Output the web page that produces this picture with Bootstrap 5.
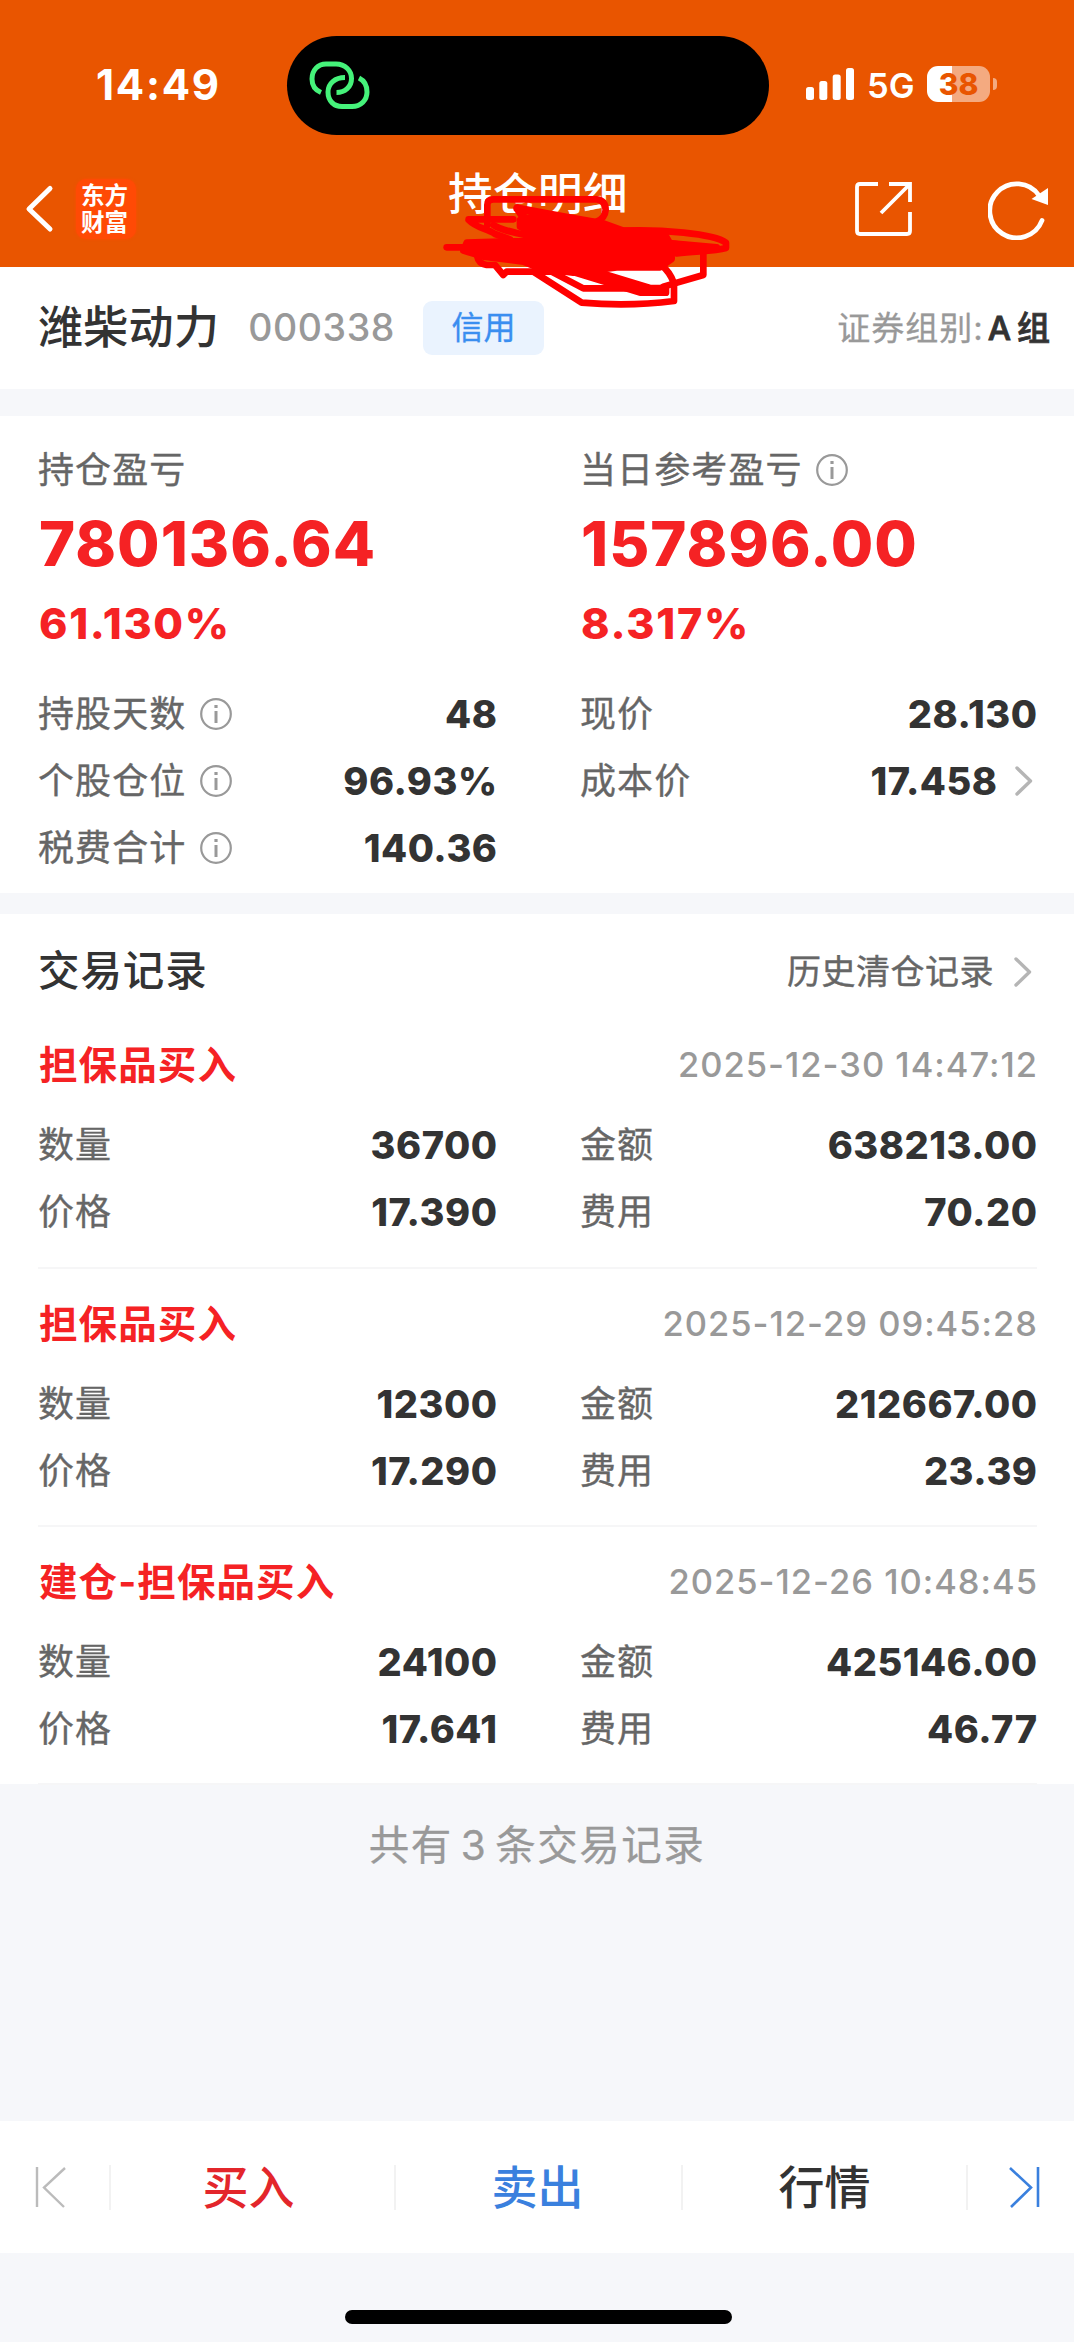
<!DOCTYPE html>
<html lang="zh-CN">
<head>
<meta charset="utf-8">
<meta name="viewport" content="width=device-width, initial-scale=1">
<title>持仓明细</title>
<link href="https://cdn.jsdelivr.net/npm/bootstrap@5.3.0/dist/css/bootstrap.min.css" rel="stylesheet">
<style>
body{font-family:Inter,"Noto Sans CJK SC",sans-serif;background:#f6f7fa;color:#333;width:1074px;height:2342px;overflow:hidden;line-height:1}
svg{display:block;flex:none}
.app-head{background:#e95500;height:267px;color:#fff}
.status{height:137px;padding:36px 0 0 96px}
.clock{font-size:42px;font-weight:700;width:190.5px;line-height:98px;letter-spacing:1.7px}
.island{width:482.5px;height:99px;border-radius:50px;background:#000;padding:25px 0 0 21px}
.cell-sig{margin-left:37px;margin-right:14px;margin-top:32px}
.net{font-size:34.5px;font-weight:600;line-height:99px;width:59px;margin-left:-1px;margin-right:1px}
.batt{width:63px;height:36px;border-radius:11px;background:linear-gradient(90deg,#fff 25px,rgba(255,255,255,.5) 25px);color:#e95500;font-size:30px;font-weight:800;line-height:36px;text-align:center;margin-top:30px}
.nub{width:4px;height:12px;border-radius:0 4px 4px 0;background:rgba(255,255,255,.5);margin:42px 0 0 3px}
.titlebar{height:130px;padding:0 24px}
.logo{width:60px;height:60px;border-radius:10px;background:#ff4a05;box-shadow:0 0 3px #ff4a05;font:700 23.5px/27px "Noto Sans CJK SC",sans-serif;padding:2px 0 0 5px;margin:42px 0 0 20px}
.title{font-size:44.5px;font-weight:500;line-height:60px;width:182px;letter-spacing:.5px;margin:27px 0 0 312px}
.stock{height:122px;padding:0 24px 0 38px}
.stock-name{font-size:45px;font-weight:500;line-height:120px;letter-spacing:.3px}
.stock-code{font-size:37.5px;font-weight:500;color:#999;letter-spacing:.6px;margin-left:29px}
.tag{width:121px;height:54px;border-radius:9px;background:#eaf3fe;color:#3a8ef0;font-size:32px;line-height:53px;text-align:center;margin-left:28px;-webkit-text-stroke:.35px}
.group{font-size:33px;color:#999;letter-spacing:1px;-webkit-text-stroke:.3px}
.group-v{color:#333;font-weight:500;margin-left:4px;letter-spacing:0;word-spacing:-3px;-webkit-text-stroke:.8px}
.sec{background:#fff;padding:0 37px 0 38px}
.half-l{width:459px;margin-right:83px}
.half-r{width:457px}
.lab{font-size:36px;color:#666;letter-spacing:1.1px;-webkit-text-stroke:.35px}
.val{font-size:38px;font-weight:800;color:#333;letter-spacing:.5px;margin-right:-.5px}
.up{color:#f52224}
.ic{margin-left:13.5px}
.r67{height:67px}
.big{font-size:61.5px;font-weight:800;height:75px;line-height:75px;letter-spacing:1px;margin:10px 0 0 1px}
.pct{font-size:43px;font-weight:800;height:60px;line-height:60px;letter-spacing:1.7px;margin:12px 0 27px 1px}
.sec-title{font-size:41.5px;font-weight:500;letter-spacing:.9px;padding-top:2px}
.more{font-size:34px;color:#666;letter-spacing:.5px;padding-top:1px;-webkit-text-stroke:.4px}
.rec{height:258px;padding-top:18px;border-bottom:2px solid #f6f6f7}
.rec-t{height:74px;margin-bottom:9px}
.act{font-size:38.5px;font-weight:700;letter-spacing:1.1px;margin-left:1px}
.when{font-size:34.5px;font-weight:500;color:#999;letter-spacing:1px;margin-right:-1px}
.total{height:337px;padding-top:38px;color:#999;font-size:40.5px;line-height:48px;letter-spacing:1.5px;word-spacing:-5px;-webkit-text-stroke:.3px}
.tabs{height:132px;background:#fff;font-size:46px;font-weight:500}
.sep{width:2px;height:45px;background:#f2f2f2}
.home{width:387px;height:14px;border-radius:7px;background:#000;margin:57px auto 0;transform:translateX(1px)}
.scrib{left:430px;top:160px;z-index:5}
</style>
</head>
<body class="position-relative">
<header class="app-head">
  <div class="status d-flex align-items-start">
    <div class="clock">14:49</div>
    <div class="island"><svg width="64" height="50" viewBox="0 0 64 50" fill="none" stroke="#45f27a" stroke-width="5"><path d="M13 31.500C7 29 4 24 4 18C4 9 10 3 18 3H28C37 3 43.500 9.500 43.500 17.500C43.500 26 37 31.500 28.500 31.500"/><path d="M37 16.500C27 16.500 20 22.500 20 31C20 40 26 45.500 34 45.500H44C53 45.500 59 39 59 31C59 24.500 56 19.500 51 17"/></svg></div>
    <svg class="cell-sig" width="48" height="32" fill="#fff"><rect y="19" width="8" height="13" rx="2.500"/><rect x="13.300" y="13" width="8" height="19" rx="2.500"/><rect x="26.700" y="6.500" width="8" height="25.500" rx="2.500"/><rect x="40" y="0" width="8" height="32" rx="2.500"/></svg>
    <div class="net">5G</div>
    <div class="batt">38</div><div class="nub"></div>
  </div>
  <div class="titlebar d-flex">
    <svg width="32" height="50" viewBox="0 0 32 50" fill="none" stroke="#fff" stroke-width="5" stroke-linecap="round" stroke-linejoin="round" style="margin-top:47px"><path d="M26 4.500L5 25L26 45"/></svg>
    <div class="logo">东方<br>财富</div>
    <div class="title text-nowrap">持仓明细</div>
    <svg class="ms-auto" width="60" height="60" viewBox="0 0 60 60" fill="none" stroke="#fff" stroke-width="3.800" style="margin-top:43px;margin-right:75px"><path d="M25 4H7Q4 4 4 7V51Q4 54 7 54H54Q57 54 57 51V32M36 4H57V22M57 4L28 33"/></svg>
    <svg width="62" height="62" viewBox="0 0 62 62" fill="none" stroke="#fff" stroke-width="4.800" style="margin-top:41px"><path d="M54 42.500A27 27 0 1 1 51 17.500" stroke-linecap="round"/><path d="M60 10V27L43.500 21Z" fill="#fff" stroke="none"/></svg>
  </div>
</header>

<section class="stock bg-white d-flex align-items-center">
  <div class="stock-name">潍柴动力</div><div class="stock-code">000338</div><div class="tag">信用</div>
  <div class="group ms-auto text-nowrap">证券组别:<span class="group-v">A 组</span></div>
</section>

<section class="sec d-flex" style="margin-top:27px;height:477px;padding-top:27px">
  <div class="half-l">
    <div class="d-flex align-items-center lab" style="height:53px">持仓盈亏</div>
    <div class="big up">780136.64</div>
    <div class="pct up">61.130%</div>
    <div class="r67 d-flex align-items-center"><span class="lab">持股天数</span><svg class="ic" width="32" height="32" viewBox="0 0 32 32"><use href="#info"/></svg><span class="val ms-auto">48</span></div>
    <div class="r67 d-flex align-items-center"><span class="lab">个股仓位</span><svg class="ic" width="32" height="32" viewBox="0 0 32 32"><use href="#info"/></svg><span class="val ms-auto">96.93%</span></div>
    <div class="r67 d-flex align-items-center"><span class="lab">税费合计</span><svg class="ic" width="32" height="32" viewBox="0 0 32 32"><use href="#info"/></svg><span class="val ms-auto">140.36</span></div>
  </div>
  <div class="half-r">
    <div class="d-flex align-items-center lab" style="height:53px">当日参考盈亏<svg class="ic" width="32" height="32" viewBox="0 0 32 32"><use href="#info"/></svg></div>
    <div class="big up">157896.00</div>
    <div class="pct up">8.317%</div>
    <div class="r67 d-flex align-items-center justify-content-between"><span class="lab">现价</span><span class="val">28.130</span></div>
    <div class="r67 d-flex align-items-center"><span class="lab">成本价</span><span class="val ms-auto">17.458</span><svg style="margin:0 4px 0 16px" width="20" height="32" viewBox="0 0 20 32"><use href="#chev"/></svg></div>
  </div>
</section>

<section class="sec" style="margin-top:21px;height:870px">
  <div class="d-flex align-items-center justify-content-between" style="height:114px">
    <div class="sec-title">交易记录</div>
    <div class="more d-flex align-items-center">历史清仓记录<svg style="margin:0 5px 0 18px" width="20" height="32" viewBox="0 0 20 32"><use href="#chev"/></svg></div>
  </div>
  <div class="rec" style="height:241px;padding-top:0">
    <div class="rec-t d-flex align-items-center justify-content-between"><span class="act up">担保品买入</span><span class="when">2025-12-30 14:47:12</span></div>
    <div class="d-flex"><div class="half-l d-flex align-items-center justify-content-between r67"><span class="lab">数量</span><span class="val">36700</span></div><div class="half-r d-flex align-items-center justify-content-between r67"><span class="lab">金额</span><span class="val">638213.00</span></div></div>
    <div class="d-flex"><div class="half-l d-flex align-items-center justify-content-between r67"><span class="lab">价格</span><span class="val">17.390</span></div><div class="half-r d-flex align-items-center justify-content-between r67"><span class="lab">费用</span><span class="val">70.20</span></div></div>
  </div>
  <div class="rec">
    <div class="rec-t d-flex align-items-center justify-content-between"><span class="act up">担保品买入</span><span class="when">2025-12-29 09:45:28</span></div>
    <div class="d-flex"><div class="half-l d-flex align-items-center justify-content-between r67"><span class="lab">数量</span><span class="val">12300</span></div><div class="half-r d-flex align-items-center justify-content-between r67"><span class="lab">金额</span><span class="val">212667.00</span></div></div>
    <div class="d-flex"><div class="half-l d-flex align-items-center justify-content-between r67"><span class="lab">价格</span><span class="val">17.290</span></div><div class="half-r d-flex align-items-center justify-content-between r67"><span class="lab">费用</span><span class="val">23.39</span></div></div>
  </div>
  <div class="rec">
    <div class="rec-t d-flex align-items-center justify-content-between"><span class="act up">建仓-担保品买入</span><span class="when">2025-12-26 10:48:45</span></div>
    <div class="d-flex"><div class="half-l d-flex align-items-center justify-content-between r67"><span class="lab">数量</span><span class="val">24100</span></div><div class="half-r d-flex align-items-center justify-content-between r67"><span class="lab">金额</span><span class="val">425146.00</span></div></div>
    <div class="d-flex"><div class="half-l d-flex align-items-center justify-content-between r67"><span class="lab">价格</span><span class="val">17.641</span></div><div class="half-r d-flex align-items-center justify-content-between r67"><span class="lab">费用</span><span class="val">46.77</span></div></div>
  </div>
</section>

<div class="total text-center">共有 3 条交易记录</div>

<nav class="tabs d-flex align-items-center">
  <div style="width:109px;padding-left:34px"><svg width="34" height="42" viewBox="0 0 34 42" fill="none" stroke="#bbb" stroke-width="2.400"><path d="M3 1V41M31 2L10 21.500L30 41"/></svg></div>
  <div class="sep"></div><div class="flex-fill text-center" style="width:283px;color:#e3262b;padding-right:8px">买入</div>
  <div class="sep"></div><div class="flex-fill text-center" style="width:285px;color:#3a80de;padding-right:2px">卖出</div>
  <div class="sep"></div><div class="flex-fill text-center" style="width:283px">行情</div>
  <div class="sep"></div>
  <div style="width:106px;padding-left:39px"><svg width="34" height="42" viewBox="0 0 34 42" fill="none" stroke="#3a80de" stroke-width="2.600"><path d="M31 1V41M3 2L24 21.500L4 41"/></svg></div>
</nav>
<div class="home"></div>

<svg class="scrib position-absolute" width="310" height="160" viewBox="0 0 930 480" fill="none" stroke="#f00" stroke-width="20" stroke-linecap="round" stroke-linejoin="round">
  <path d="M172 195V135Q172 118 190 118H500Q527 122 527 150Q525 175 500 185"/>
  <path d="M262 145C330 158 400 172 510 190M262 145L290 185" stroke-width="24"/>
  <path d="M116 178H250M116 180C140 205 170 205 195 222L240 238"/>
  <path d="M190 195C220 215 280 222 350 240"/>
  <path d="M50 262H150"/>
  <path d="M110 248L210 245L340 240L270 200V180L330 165L520 190L580 212L700 215L720 250L820 262L800 270L725 280V297L690 322H560L430 338L330 325L280 305L160 290L100 272Z" fill="#f00"/>
  <path d="M580 212C690 208 850 220 888 248V264C850 275 800 272 740 280M700 248L860 262"/>
  <path d="M142 290Q145 310 170 315H195L220 345L230 335H420"/>
  <path d="M310 335L455 428Q600 440 732 423V370Q720 335 690 312"/>
  <path d="M370 338L460 385H600"/>
  <path d="M410 330L630 398H708V384H660L500 335Z" fill="#f00"/>
  <path d="M700 380L820 345V280"/>
</svg>
<svg width="0" height="0" class="position-absolute"><defs>
  <g id="info" fill="none" stroke="#999" stroke-width="2.200"><circle cx="16" cy="16" r="14.800"/><path d="M16 13V25" stroke-width="3"/><path d="M16 7V10" stroke-width="3.200"/></g>
  <path id="chev" d="M4 3L17.500 16L4 29" fill="none" stroke="#b5b5b5" stroke-width="3.400" stroke-linecap="round" stroke-linejoin="round"/>
</defs></svg>
<script src="https://cdn.jsdelivr.net/npm/bootstrap@5.3.0/dist/js/bootstrap.bundle.min.js"></script>
</body>
</html>
